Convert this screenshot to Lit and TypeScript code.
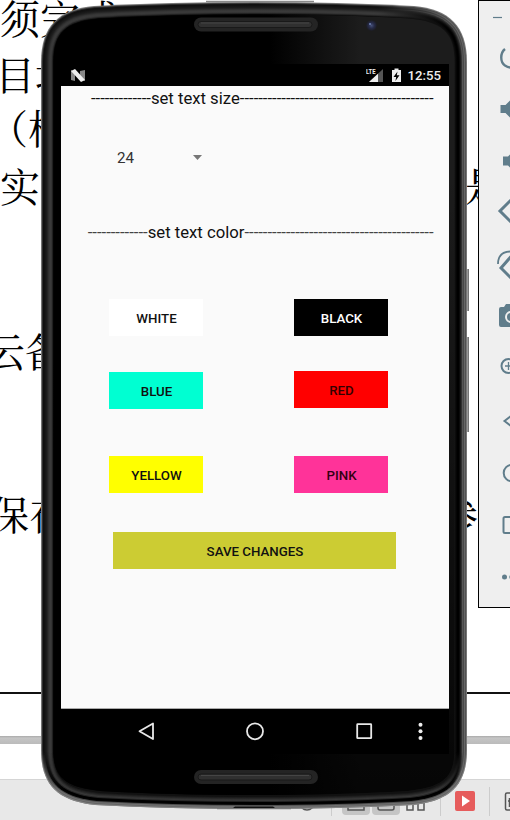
import { LitElement, html, css, svg } from "lit";
import { customElement } from "lit/decorators.js";

/** Outline of the handset, shrunk by n pixels on every side. */
const outline = (n: number, foot = n) => {
  const l = 41 + n, r = 467 - n, t = n, b = foot;
  return `M${l} 62C${l} ${26 + t * 0.5} ${59 + n * 0.6} ${9 + t} ${94 + n * 0.4} ${6 + t}Q170 ${2 + t} 254 ${2 + t}
  Q340 ${2 + t} ${414 - n * 0.4} ${6 + t}C${449 - n * 0.6} ${9 + t} ${r} ${26 + t * 0.5} ${r} 62V750
  C${r} ${786 - b * 0.5} ${449 - n * 0.6} ${801 - b} ${413 - n * 0.4} ${805 - b}Q340 ${809 - b} 254 ${809 - b}
  Q170 ${809 - b} ${95 + n * 0.4} ${805 - b}C${59 + n * 0.6} ${801 - b} ${l} ${786 - b * 0.5} ${l} 750Z`;
};

const LEFT = ["#777", "#303030", "#101010", "#121212", "#171717", "#1c1c1c", "#252525", "#303030", "#383838", "#3a3a3a", "#343434", "#202020", "#080808"];
const RIGHT = ["#777", "#505050", "#666", "#484848", "#555", "#303030", "#1b1b1b", "#0a0a0a", "#000", "#000", "#050505", "#0c0c0c", "#131313"];
const FOOT = ["#858585", "#666", "#707070", "#505050", "#050505", "#000", "#000", "#252525", "#383838", "#303030", "#252525", "#1b1b1b", "#111"];

@customElement("phone-shell")
class PhoneShell extends LitElement {
  static styles = css`
    :host { display: block; }
    svg { display: block; }
  `;
  render() {
    return html`<svg width="510" height="820" viewBox="0 0 510 820">
      <defs>
        ${LEFT.map((c, i) => svg`<linearGradient id=${"g" + i} gradientUnits="userSpaceOnUse" x1="60" x2="448" y1="0" y2="0">
          <stop offset="0" stop-color=${c}/><stop offset=".82" stop-color=${c}/><stop offset="1" stop-color=${RIGHT[i]}/></linearGradient>`)}
        <linearGradient id="face" gradientUnits="userSpaceOnUse" x1="270" x2="360" y1="0" y2="0">
          <stop stop-color="#000"/><stop offset="1" stop-color="#1c1c1c"/></linearGradient>
        <linearGradient id="fade" x1="0" x2="0" y1="0" y2="1">
          <stop offset=".2" stop-color="#000" stop-opacity="0"/><stop offset="1" stop-color="#000" stop-opacity=".8"/></linearGradient>
        <radialGradient id="lens"><stop stop-color="#465078"/><stop offset=".5" stop-color="#262b48"/><stop offset="1" stop-color="#1b1b20"/></radialGradient>
        <linearGradient id="lowShade" gradientUnits="userSpaceOnUse" x1="0" x2="0" y1="752" y2="790">
          <stop stop-color="#000"/><stop offset="1" stop-color="#fff"/></linearGradient>
        <mask id="low" maskUnits="userSpaceOnUse" x="0" y="750" width="510" height="70"><rect x="0" y="750" width="510" height="70" fill="url(#lowShade)"/></mask>
      </defs>
      <path d="M466 251h1v18h2v42h-3zM466 337h3v95h-3z" fill="#999"/>
      <path d="M468.500 269v42M468.500 337v95" stroke="#777"/>
      ${LEFT.map((_, i) => svg`<path d=${outline(i, i)} fill=${`url(#g${i})`}/>`)}
      <g mask="url(#low)">${FOOT.map((c, i) => svg`<path d=${outline(i, i)} fill=${c}/>`)}</g>
      <path d=${outline(12.5, 14)} fill="url(#face)"/>
      <path d=${outline(12.5, 14)} fill="url(#fade)"/>
      <path d="M206 1.500h108" stroke="#8a8a8a" stroke-width="1.500"/>
      <path d="M217 808.500h74" stroke="#777" stroke-width="1.500"/>
      <path d="M233 808l2-1.500h38l2 1.500z" fill="#111"/>
      ${[24.5, 777].map((y) => svg`<rect x="194" y=${y - 7} width="124" height="14" rx="7" fill="#242424"/>
        <rect x="198" y=${y - 3} width="114" height="6" rx="3" fill="#303030" stroke="#191919" stroke-width="1"/>
        <path d=${`M201 ${y - 1.5}h108`} stroke="#454545" stroke-width="1"/>`)}
      <circle cx="371.500" cy="25.500" r="5.500" fill="url(#lens)"/>
      <circle cx="370" cy="24" r="1" fill="#6f82b4"/>
    </svg>`;
  }
}

@customElement("status-bar")
class StatusBar extends LitElement {
  static styles = css`
    :host { display: flex; align-items: center; height: 22px; padding: 0 8px 0 9px; background: #000; color: #eee; font: 500 13.2px Roboto, sans-serif; }
    .gap { flex: 1; }
    .signal { margin-right: 8px; }
    .battery { margin-right: 7px; }
    svg { display: block; }
  `;
  render() {
    return html`
      <svg width="16" height="13" viewBox="0 0 16 13"><path d="M1 1l4 2v9l-4-1zM10 2l5-1v11l-5-2z" fill="#888"/><path d="M1 2l4-2 10 11-4 2z" fill="#eee"/></svg>
      <span class="gap"></span>
      <svg class="signal" width="18" height="16" viewBox="0 0 18 16"><path d="M17 2v13H3z" fill="#555"/><path d="M12 6.700V15H3z" fill="#eee"/>
        <text x="0" y="7" font-family="Roboto" font-size="7.600" font-weight="700" fill="#eee" textLength="9.500" lengthAdjust="spacingAndGlyphs">LTE</text></svg>
      <svg class="battery" width="9" height="14" viewBox="0 0 9 14"><path d="M0 2h2.500V.5h4V2H9v12H0z" fill="#eee"/><path d="M5.500 3.500L1.500 9h2.700l-.8 4L7.500 7.200H4.800z" fill="#000"/></svg>
      <span>12:55</span>`;
  }
}

@customElement("settings-page")
class SettingsPage extends LitElement {
  static styles = css`
    :host { display: flex; flex-direction: column; height: 623px; box-sizing: border-box; background: #fafafa; color: #111; font-family: Roboto, sans-serif; border-bottom: 1px solid #aaa; }
    .title { display: flex; align-items: center; justify-content: flex-end; height: 24px; padding-right: 15.500px; font-size: 16.7px; white-space: pre; }
    .title.second { margin-top: 44px; }
    .second .rule { color: #444; }
    .picker { display: flex; align-items: center; justify-content: space-between; width: 85px; height: 36px; margin: 30px 0 0 56px; font-size: 15.2px; color: #333; }
    .picker svg { display: block; margin-bottom: 2px; }
    .grid { display: grid; grid-template-columns: 94px 94px; column-gap: 91px; margin: 55px 0 0 48px; }
    .col { display: flex; flex-direction: column; }
    button { display: block; width: 100%; height: 37px; border: 0; border-radius: 0; padding: 1px 0 0 1px; font: 500 13.3px Roboto, sans-serif; color: #111; }
    .col button + button { margin-top: 36px; }
    .col button + button + button { margin-top: 47px; }
    .right button + button { margin-top: 35px; }
    .right button + button + button { margin-top: 48px; }
    .white { background: #fff; }
    .black { background: #000; color: #fff; }
    .blue { background: #00ffd2; }
    .red { background: #f00; color: #300; }
    .yellow { background: #ff0; }
    .pink { background: #ff3399; color: #301; }
    .save { width: 283px; margin: 39px 0 0 52px; background: #cccc33; }
  `;
  render() {
    return html`
      <div class="title"><span class="rule">${"-".repeat(13)}</span><span>set text size</span><span class="rule">${"-".repeat(42)}</span></div>
      <div class="picker"><span>24</span><svg width="9" height="5" viewBox="0 0 9 5"><path d="M0 0h9L4.500 5z" fill="#777"/></svg></div>
      <div class="title second"><span class="rule">${"-".repeat(13)}</span><span>set text color</span><span class="rule">${"-".repeat(41)}</span></div>
      <div class="grid">
        <div class="col"><button class="white">WHITE</button><button class="blue">BLUE</button><button class="yellow">YELLOW</button></div>
        <div class="col right"><button class="black">BLACK</button><button class="red">RED</button><button class="pink">PINK</button></div>
      </div>
      <button class="save">SAVE CHANGES</button>`;
  }
}

@customElement("nav-bar")
class NavBar extends LitElement {
  static styles = css`
    :host { display: block; height: 45px; background: #000; }
    svg { display: block; }
  `;
  render() {
    return html`<svg width="388" height="45" viewBox="0 0 388 45" fill="none" stroke="#e8e8e8" stroke-width="1.800">
      <path d="M92 14.500v15.500L78.500 22.300z" stroke-linejoin="round"/><circle cx="194" cy="22.300" r="8"/>
      <rect x="296.200" y="15.200" width="14" height="14" rx=".5"/>
      <g fill="#eee" stroke="none"><circle cx="359.500" cy="15.700" r="2"/><circle cx="359.500" cy="22.300" r="2"/><circle cx="359.500" cy="29" r="2"/></g></svg>`;
  }
}

@customElement("tool-strip")
class ToolStrip extends LitElement {
  static styles = css`
    :host { display: block; box-sizing: border-box; width: 32px; height: 608px; border: 1px solid #000; border-right: 0; background: #efefef; overflow: hidden; }
    svg { display: block; }
  `;
  render() {
    return html`<svg width="31" height="606" viewBox="479 1 31 606" fill="none" stroke="#607d8b" stroke-width="2">
      <path d="M493 17.500h9" stroke-width="1.200"/>
      <path d="M505 49C500 53 500 62 505 65.500Q508 67.500 511 67.500" stroke-width="2.400"/>
      <g fill="#607d8b" stroke="none"><path d="M500.500 105h5l5-5v18l-5-5h-5zM503 156.500h5l3-3v15l-3-3h-5z"/></g>
      <path d="M511 200l-11 11 11 11" stroke-width="3"/>
      <path d="M511 256.500l-10 11.500 10 10" stroke-width="3"/><path d="M498 264Q498 252 510 251.500" stroke-width="1.800"/>
      <path d="M499 309q0-2 2-2h3l2-3h5v23h-10q-2 0-2-2z" fill="#607d8b" stroke="none"/><circle cx="511" cy="317" r="5" stroke="#efefef"/>
      <circle cx="508.500" cy="366" r="7"/><path d="M505 366h6M508.500 362v8" stroke-width="1.300"/>
      <path d="M511 416l-6.500 5 6.500 5" stroke-width="2"/><circle cx="512" cy="473" r="8.300" stroke-width="2"/>
      <path d="M511 517h-6q-1.500 0-1.500 1.500v13q0 1.500 1.500 1.500h6" stroke-width="2"/>
      <circle cx="504.500" cy="577" r="2.500" fill="#607d8b" stroke="none"/><circle cx="511" cy="577" r="2" fill="#8fa4ad" stroke="none"/>
    </svg>`;
  }
}

@customElement("app-root")
class AppRoot extends LitElement {
  static styles = css`
    :host { display: block; position: relative; width: 510px; height: 820px; overflow: hidden; background: #fff; }
    .document { height: 736px; position: relative; overflow: hidden; }
    .line { position: absolute; color: #000; font: 400 40px/40px "Noto Serif CJK SC", "Noto Sans CJK SC", sans-serif; white-space: pre; }
    .l1 { left: 0; top: -3px; }
    .l2 { left: -5px; top: 53px; }
    .l3 { left: -12px; top: 107px; }
    .l4 { left: 0; top: 165px; }
    .l5 { left: 465px; top: 164px; }
    .l6 { left: -15px; top: 330px; }
    .l7 { left: -11px; top: 493px; }
    .l8 { left: 438px; top: 493px; }
    .border { position: absolute; left: 0; right: 0; top: 692px; height: 1.500px; background: #111; }
    .scroll { height: 8px; background: linear-gradient(#aaa, #c5c5c5 25%, #bbb); }
    .blank { height: 35px; }
    .dock { box-sizing: border-box; height: 41px; background: #e8e8e8; border-top: 1px solid #d5d5d5; }
    .dock svg { display: block; }
    .shell { position: absolute; left: 0; top: 0; }
    .screen { position: absolute; left: 61px; top: 64px; width: 388px; height: 690px; }
    .tools { position: absolute; left: 478px; top: 0; }
  `;
  render() {
    return html`
      <div class="document">
        <span class="line l1">须完成</span><span class="line l2">目坛</span><span class="line l3">（根</span><span class="line l4">实</span>
        <span class="line l5">是</span><span class="line l6">云备</span><span class="line l7">保存</span><span class="line l8">参</span>
        <div class="border"></div>
      </div>
      <div class="scroll"></div>
      <div class="blank"></div>
      <div class="dock"><svg width="510" height="40" viewBox="0 780 510 40" fill="none" stroke="#555" stroke-width="1.500">
        <circle cx="307" cy="803" r="7"/>
        <path d="M342 790h28v21q0 4-4 4h-20q-4 0-4-4zM372 790h28v21q0 4-4 4h-20q-4 0-4-4z" fill="#c5c5c5" stroke="none"/>
        <path d="M348 796v14h16v-14M378 796v12q0 2 2 2h12q2 0 2-2v-12M407 798v12h6v-12M418 798v12h6v-12"/>
        <path d="M331.500 808v8M440.500 787v29M489.500 787v29" stroke="#ccc" stroke-width="1"/>
        <rect x="455" y="791" width="20" height="20" rx="2" fill="#e65c5c" stroke="none"/><path d="M462 795.500l8 5.500-8 5.500z" fill="#fff" stroke="none"/>
        <path d="M512 793h-5q-1.500 0-1.500 1.500v14q0 1.500 1.500 1.500h5M509.500 798v9M508 801h3"/>
      </svg></div>
      <phone-shell class="shell"></phone-shell>
      <div class="screen"><status-bar></status-bar><settings-page></settings-page><nav-bar></nav-bar></div>
      <tool-strip class="tools"></tool-strip>`;
  }
}
